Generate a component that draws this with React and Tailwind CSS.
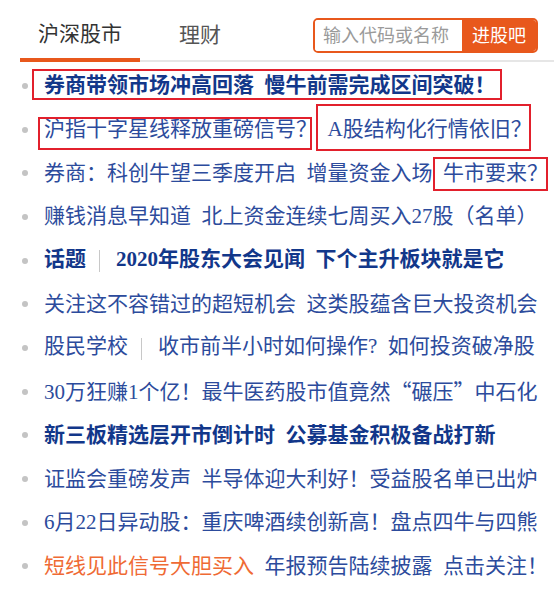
const NEWS = [
  { bold: true, parts: [{ t: '券商带领市场冲高回落' }, { t: '慢牛前需完成区间突破！', sp: true }] },
  { parts: [{ t: '沪指十字星线释放重磅信号？' }, { t: 'A股结构化行情依旧？', sp: true }] },
  { parts: [{ t: '券商：科创牛望三季度开启' }, { t: '增量资金入场', sp: true }, { t: '牛市要来？', sp: true }] },
  { parts: [{ t: '赚钱消息早知道' }, { t: '北上资金连续七周买入27股（名单）', sp: true }] },
  { bold: true, tag: '话题', parts: [{ t: '2020年股东大会见闻' }, { t: '下个主升板块就是它', sp: true }] },
  { parts: [{ t: '关注这不容错过的超短机会' }, { t: '这类股蕴含巨大投资机会', sp: true }] },
  { tag: '股民学校', parts: [{ t: '收市前半小时如何操作?' }, { t: '如何投资破净股', sp: true }] },
  { quote: true },
  { bold: true, parts: [{ t: '新三板精选层开市倒计时' }, { t: '公募基金积极备战打新', sp: true }] },
  { parts: [{ t: '证监会重磅发声' }, { t: '半导体迎大利好！受益股名单已出炉', sp: true }] },
  { parts: [{ t: '6月22日异动股：重庆啤酒续创新高！盘点四牛与四熊' }] },
  { parts: [{ t: '短线见此信号大胆买入', hot: true }, { t: '年报预告陆续披露', sp: true }, { t: '点击关注！', sp: true }] },
]

// red annotation frames drawn over the list
const MARKS = [
  'left-[32px] top-[69px] w-[470px] h-[31px]',
  'left-[38px] top-[117px] w-[274px] h-[33px]',
  'left-[316px] top-[104px] w-[215px] h-[47px]',
  'left-[433px] top-[157px] w-[115px] h-[34px]',
]

function Divider() {
  return <span className="ml-[13px] mr-[16px] inline-block h-[22px] w-px bg-[#c8c8c8] align-middle" />
}

function Quote({ children }) {
  return <span className="inline-block w-[21px] text-center font-['Noto_Sans_CJK_SC',sans-serif]">{children}</span>
}

function NewsRow({ item }) {
  const color = item.bold ? 'text-[#12378a] font-bold' : 'text-[#2c4b9c]'

  return (
    <li className="flex h-[43.7px] items-center">
      <span className="ml-[22px] mr-[16px] h-[6px] w-[6px] shrink-0 rounded-full bg-[#c4c4c4]" />
      <p className={`whitespace-nowrap ${color}`}>
        {item.tag && (
          <>
            {item.tag}
            <Divider />
          </>
        )}
        {item.quote ? (
          <>
            30万狂赚1个亿！最牛医药股市值竟然<Quote>“</Quote>碾压<Quote>”</Quote>中石化
          </>
        ) : (
          item.parts.map((part, index) => (
            <span
              key={index}
              className={`${part.sp ? 'ml-[10.5px]' : ''} ${part.hot ? 'text-[#ef6a34]' : ''}`}
            >
              {part.t}
            </span>
          ))
        )}
      </p>
    </li>
  )
}

export default function App() {
  return (
    <div className="relative h-[596px] w-[554px] overflow-hidden bg-white font-['Liberation_Serif','Noto_Sans_CJK_SC',serif] text-[21px] leading-none">
      <header className="ml-[20px] flex h-[62px] border-b-2 border-[#e6e6e6]">
        <div className="-mb-[2px] flex w-[120px] items-center justify-center border-b-4 border-[#e8581c] pt-[10px] text-[#333]">
          沪深股市
        </div>
        <div className="flex w-[120px] items-center justify-center pt-[10px] text-[#555]">理财</div>
        <div className="ml-auto mr-[16px] mt-[18px] flex h-[35px] w-[225px] overflow-hidden rounded-[5px] border-2 border-[#e8581c] text-[18px]">
          <div className="flex flex-1 items-center bg-white pl-[8px] text-[#9a9a9a]">输入代码或名称</div>
          <button type="button" className="w-[74px] bg-[#e8581c] text-white">
            进股吧
          </button>
        </div>
      </header>

      <ul className="pt-[2px]">
        {NEWS.map((item, index) => (
          <NewsRow key={index} item={item} />
        ))}
      </ul>

      {MARKS.map((pos) => (
        <div key={pos} className={`pointer-events-none absolute border-2 border-[#e2202c] ${pos}`} />
      ))}
    </div>
  )
}
